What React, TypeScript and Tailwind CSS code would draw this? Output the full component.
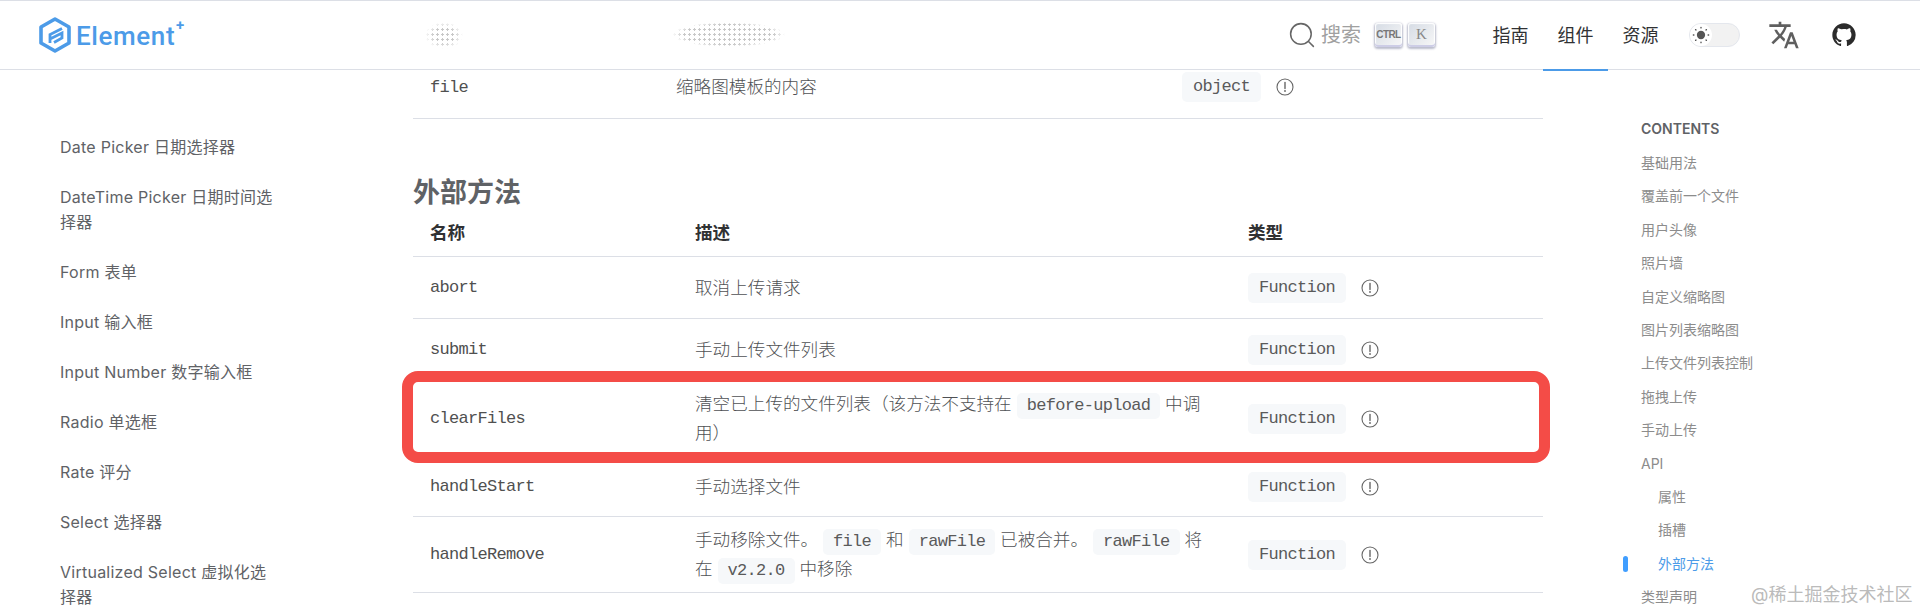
import React from 'react';

const sans = "font-['Inter','Noto_Sans_CJK_SC',sans-serif]";
const mono = "font-['Liberation_Mono','Noto_Sans_CJK_SC',monospace]";

const sideItems = [
  'Date Picker 日期选择器',
  'DateTime Picker 日期时间选择器',
  'Form 表单',
  'Input 输入框',
  'Input Number 数字输入框',
  'Radio 单选框',
  'Rate 评分',
  'Select 选择器',
  'Virtualized Select 虚拟化选择器',
];

const tocItems = [
  { label: '基础用法' },
  { label: '覆盖前一个文件' },
  { label: '用户头像' },
  { label: '照片墙' },
  { label: '自定义缩略图' },
  { label: '图片列表缩略图' },
  { label: '上传文件列表控制' },
  { label: '拖拽上传' },
  { label: '手动上传' },
  { label: 'API' },
  { label: '属性', sub: true },
  { label: '插槽', sub: true },
  { label: '外部方法', sub: true, active: true },
  { label: '类型声明' },
];

const Code: React.FC<{ children: React.ReactNode }> = ({ children }) => (
  <code className={`${mono} inline-block rounded-[5px] bg-[#f6f8fa] px-[10px] text-[17px] leading-[26px] tracking-[-0.7px] text-[#5a5a5a]`}>{children}</code>
);

const InfoIcon = () => (
  <svg viewBox="0 0 18 18" className="h-[18px] w-[18px] text-[#666]" fill="none" stroke="currentColor">
    <circle cx="9" cy="9" r="8" strokeWidth="1.1" />
    <path d="M9 4.5v6" strokeWidth="1.4" strokeLinecap="round" />
    <circle cx="9" cy="13" r="0.9" fill="currentColor" stroke="none" />
  </svg>
);

const TypeCell: React.FC<{ name: string }> = ({ name }) => (
  <div className="flex items-center gap-[15px]">
    <code className={`${mono} rounded-[5px] bg-[#f6f8fa] px-[11px] text-[17px] leading-[30px] tracking-[-0.7px] text-[#5a5a5a]`}>{name}</code>
    <InfoIcon />
  </div>
);

const methods: { name: string; desc: React.ReactNode; height: string }[] = [
  { name: 'abort', desc: '取消上传请求', height: 'h-[62px]' },
  { name: 'submit', desc: '手动上传文件列表', height: 'h-[62px]' },
  {
    name: 'clearFiles',
    desc: (
      <>
        清空已上传的文件列表（该方法不支持在 <Code>before-upload</Code> 中调用）
      </>
    ),
    height: 'h-[76px]',
  },
  { name: 'handleStart', desc: '手动选择文件', height: 'h-[60px]' },
  {
    name: 'handleRemove',
    desc: (
      <>
        手动移除文件。 <Code>file</Code> 和 <Code>rawFile</Code> 已被合并。 <Code>rawFile</Code> 将在 <Code>v2.2.0</Code> 中移除
      </>
    ),
    height: 'h-[76px]',
  },
];

const Logo = () => (
  <div className="flex items-center gap-[5px]">
    <svg viewBox="0 0 32 36" className="h-[36px] w-[32px]" fill="none" stroke="#4c9be8">
      <path d="M16 2 30 10v16L16 34 2 26V10z" strokeWidth="3.6" strokeLinejoin="round" />
      <path d="M23 11.5 11 17.5V26M11 22l12-6v5l-8 4.5" strokeWidth="2.8" />
    </svg>
    <div className="relative pt-[3px]">
      <span className="font-['Roboto',sans-serif] text-[26px] font-medium leading-none tracking-[0.6px] text-[#4c9be8]">Element</span>
      <span className="absolute -right-[9px] -top-[2px] font-['Roboto',sans-serif] text-[15px] font-bold leading-none text-[#4c9be8]">+</span>
    </div>
  </div>
);

const Header = () => (
  <header className="relative flex h-[70px] items-center justify-between border-b border-t border-[#dcdfe6] bg-white pl-[39px] pr-[62px]">
    <Logo />
    {/* 导航栏的模糊点阵 */}
    <div className="absolute left-[425px] top-[21px] h-[27px] w-[38px] bg-[radial-gradient(#c8c8c8_1px,transparent_1.4px)] bg-[size:5px_5px] [mask-image:radial-gradient(ellipse_closest-side,#000_55%,transparent)]" />
    <div className="absolute left-[672px] top-[21px] h-[25px] w-[113px] bg-[radial-gradient(#c8c8c8_1px,transparent_1.4px)] bg-[size:5px_5px] [mask-image:radial-gradient(ellipse_closest-side,#000_80%,transparent)]" />
    <div className="flex items-center">
      <svg viewBox="0 0 24 24" className="h-[26px] w-[26px] text-[#666]" fill="none" stroke="currentColor" strokeWidth="1.4">
        <circle cx="11" cy="11" r="9.5" />
        <path d="m18 18 4.5 4.5" strokeLinecap="round" />
      </svg>
      <span className={`${sans} ml-[6px] text-[20px] text-[#a0a0a0]`}>搜索</span>
      <kbd className="ml-[14px] flex h-[24px] w-[27px] items-center justify-center rounded-[3px] bg-[linear-gradient(-225deg,#d5dbe4,#f8f8f8)] pb-[2px] font-['Liberation_Sans',sans-serif] text-[10px] font-bold tracking-[-0.6px] text-[#777] shadow-[inset_0_-2px_0_0_#cdcde6,inset_0_0_1px_1px_#fff,0_1px_2px_1px_rgba(30,35,90,0.3)]">CTRL</kbd>
      <kbd className="ml-[6px] flex h-[24px] w-[27px] items-center justify-center rounded-[3px] bg-[linear-gradient(-225deg,#d5dbe4,#f8f8f8)] pb-[2px] font-['Liberation_Serif',serif] text-[15px] text-[#888] shadow-[inset_0_-2px_0_0_#cdcde6,inset_0_0_1px_1px_#fff,0_1px_2px_1px_rgba(30,35,90,0.3)]">K</kbd>
      <nav className={`${sans} ml-[43px] flex text-[18px] text-[#303133]`}>
        <a className="flex h-[69px] w-[65px] items-center justify-center">指南</a>
        <a className="relative flex h-[69px] w-[65px] items-center justify-center">
          组件
          <span className="absolute inset-x-0 -bottom-[1px] h-[2px] bg-[#4c9be8]" />
        </a>
        <a className="flex h-[69px] w-[65px] items-center justify-center">资源</a>
      </nav>
      <div className="ml-[16px] flex h-[24px] w-[51px] items-center rounded-full border border-[#e4e7ed] bg-[#f2f2f2]">
        <div className="flex h-[22px] w-[22px] items-center justify-center rounded-full bg-white">
          <svg viewBox="0 0 20 20" className="h-[18px] w-[18px] text-[#555]" fill="currentColor">
            <circle cx="10" cy="10" r="4.6" />
            <g stroke="currentColor" strokeWidth="1.5" strokeLinecap="round">
              <path d="M10 1.5v.6M10 17.9v.6M1.5 10h.6M17.9 10h.6M4 4l.4.4M15.6 15.6l.4.4M4 16l.4-.4M15.6 4.4l.4-.4" />
            </g>
          </svg>
        </div>
      </div>
      <svg viewBox="0 0 24 24" className="ml-[28px] h-[32px] w-[32px] text-[#5f5f5f]" fill="currentColor">
        <path d="M12.87 15.07l-2.54-2.51.03-.03c1.74-1.94 2.98-4.17 3.71-6.53H17V4h-7V2H8v2H1v1.99h11.17C11.5 7.92 10.44 9.75 9 11.35 8.07 10.32 7.3 9.19 6.69 8h-2c.73 1.63 1.73 3.17 2.98 4.56l-5.09 5.02L4 19l5-5 3.11 3.11.76-2.04zM18.5 10h-2L12 22h2l1.12-3h4.75L21 22h2l-4.5-12zm-2.62 7l1.62-4.33L19.12 17h-3.24z" />
      </svg>
      <svg viewBox="0 0 24 24" className="ml-[30px] h-[28px] w-[28px] text-[#2b2b2b]" fill="currentColor">
        <path d="M12 2C6.48 2 2 6.48 2 12c0 4.42 2.87 8.17 6.84 9.49.5.09.66-.22.66-.48v-1.7c-2.78.6-3.37-1.34-3.37-1.34-.45-1.16-1.11-1.46-1.11-1.46-.91-.62.07-.61.07-.61 1 .07 1.53 1.03 1.53 1.03.89 1.53 2.34 1.09 2.91.83.09-.65.35-1.09.63-1.34-2.22-.25-4.56-1.11-4.56-4.94 0-1.09.39-1.98 1.03-2.68-.1-.25-.45-1.27.1-2.65 0 0 .84-.27 2.75 1.02A9.56 9.56 0 0 1 12 6.84c.85 0 1.7.11 2.5.34 1.91-1.29 2.75-1.02 2.75-1.02.55 1.38.2 2.4.1 2.65.64.7 1.03 1.59 1.03 2.68 0 3.84-2.34 4.68-4.57 4.93.36.31.68.92.68 1.85v2.74c0 .27.16.58.67.48A10.01 10.01 0 0 0 22 12c0-5.52-4.48-10-10-10z" />
      </svg>
    </div>
  </header>
);

export default function App() {
  return (
    <div className={`${sans} relative h-[610px] overflow-hidden bg-white`}>
      <Header />
      <div className="flex h-[540px] overflow-hidden">
        <aside className="w-[413px] shrink-0 pl-[60px] pt-[65px]">
          <ul className="flex w-[216px] flex-col gap-[25px] text-[16px] leading-[25px] tracking-[0.25px] text-[#606266]">
            {sideItems.map((item) => (
              <li key={item}>{item}</li>
            ))}
          </ul>
        </aside>

        <main className="w-[1130px] shrink-0">
          <table className="-mt-[14px] w-full table-fixed border-collapse text-[17.6px] font-light text-[#4f5154]">
            <colgroup>
              <col className="w-[246px]" />
              <col className="w-[506px]" />
              <col />
            </colgroup>
            <tbody>
              <tr className="h-[62px] border-b border-[#dcdfe6]">
                <td className={`${mono} px-[17px] pt-[2px] text-[17px] font-normal tracking-[-0.7px] text-[#505050]`}>file</td>
                <td className="px-[17px] pt-[1px]">缩略图模板的内容</td>
                <td className="px-[17px] pt-[1px]">
                  <TypeCell name="object" />
                </td>
              </tr>
            </tbody>
          </table>

          <h2 className="mt-[54px] text-[27px] font-bold leading-[40px] text-[#5f6266]">外部方法</h2>

          <table className="w-full table-fixed border-collapse text-[17.6px] font-light text-[#4f5154]">
            <colgroup>
              <col className="w-[265px]" />
              <col className="w-[553px]" />
              <col />
            </colgroup>
            <thead>
              <tr className="h-[44px] border-b border-[#dcdfe6] text-left text-[#303133]">
                <th className="px-[17px] pb-[2px] font-bold">名称</th>
                <th className="px-[17px] pb-[2px] font-bold">描述</th>
                <th className="px-[17px] pb-[2px] font-bold">类型</th>
              </tr>
            </thead>
            <tbody>
              {methods.map((m) => (
                <tr key={m.name} className={`${m.height} border-b border-[#dcdfe6]`}>
                  <td className={`${mono} px-[17px] text-[17px] font-normal tracking-[-0.7px] text-[#505050]`}>{m.name}</td>
                  <td className="px-[17px] leading-[28px]">{m.desc}</td>
                  <td className="px-[17px]">
                    <TypeCell name="Function" />
                  </td>
                </tr>
              ))}
            </tbody>
          </table>
        </main>

        <aside className="flex-1 pl-[98px] pt-[46px]">
          <p className="text-[14px] font-semibold leading-[25px] text-[#5f6266]">CONTENTS</p>
          <ul className="mt-[5px] text-[14px] leading-[33.4px] text-[#8c8c8c]">
            {tocItems.map((item) => (
              <li key={item.label} className={`relative ${item.sub ? 'pl-[17px]' : ''} ${item.active ? 'text-[#4c9be8]' : ''}`}>
                {item.active && <span className="absolute -left-[18px] top-[9px] h-[16px] w-[5px] rounded-full bg-[#409eff]" />}
                {item.label}
              </li>
            ))}
          </ul>
        </aside>
      </div>

      {/* 红色标注框 */}
      <div className="absolute left-[402px] top-[371px] h-[92px] w-[1148px] rounded-[16px] border-[11px] border-[#f44c47]" />
      {/* 水印 */}
      <span className="absolute left-[1751px] top-[583px] text-[18px] leading-[24px] text-[#a8a8a8]/80">@稀土掘金技术社区</span>
    </div>
  );
}
